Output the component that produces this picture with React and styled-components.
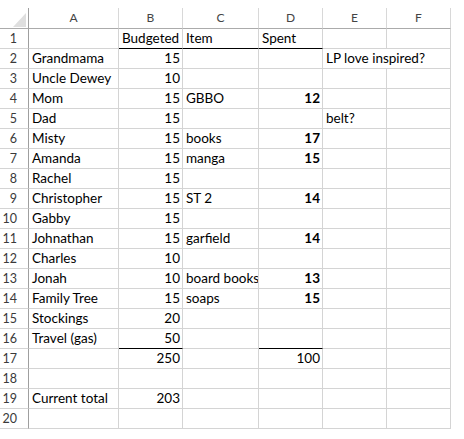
import React from "react";
import styled, { createGlobalStyle } from "styled-components";

const Global = createGlobalStyle`
  html, body { margin: 0; padding: 0; background: #ffffff; }
  body { font-family: Lato, "Liberation Sans", sans-serif; }
`;

const Page = styled.div`
  padding-top: 8px;
`;

const Sheet = styled.div`
  display: grid;
  grid-template-columns: 29px 90px 64px 76px 64px 64px 64px;
  grid-template-rows: 21px repeat(20, 20px);
  width: 451px;
  font-family: Lato, "Liberation Sans", sans-serif;
`;

const Corner = styled.div`
  position: relative;
  box-sizing: border-box;
  border-right: 1px solid #9f9f9f;
  border-bottom: 1px solid #ababab;
  &::after {
    content: "";
    position: absolute;
    right: 2px;
    bottom: 1px;
    width: 0;
    height: 0;
    border-style: solid;
    border-width: 0 0 14px 13px;
    border-color: transparent transparent #dfdfdf transparent;
  }
`;

const ColHead = styled.div`
  box-sizing: border-box;
  border-right: 1px solid #d8d8d8;
  border-bottom: 1px solid #ababab;
  font-size: 12px;
  line-height: 20px;
  text-align: center;
  color: #444444;
`;

const RowHead = styled.div`
  box-sizing: border-box;
  border-right: 1px solid #9f9f9f;
  border-bottom: 1px solid #d4d4d4;
  font-size: 12.5px;
  line-height: 20px;
  text-align: right;
  padding-right: 11px;
  color: #3a3a3a;
`;

const Cell = styled.div`
  box-sizing: border-box;
  grid-column: ${(p) => (p.$span ? `span ${p.$span}` : "auto")};
  border-right: 1px solid #d4d4d4;
  border-bottom: 1px solid ${(p) => (p.$rule ? "#000000" : "#d4d4d4")};
  font-size: 13.5px;
  line-height: 19px;
  padding: 0 2px 0 3px;
  white-space: nowrap;
  overflow: hidden;
  text-align: ${(p) => (p.$num ? "right" : "left")};
  font-weight: ${(p) => (p.$bold ? 700 : 400)};
  color: #000000;
`;

const cols = ["A", "B", "C", "D", "E", "F"];

// each row: [A, B, C, D, E, F] with optional cell config objects
const rows = [
  [null, { t: "Budgeted", rule: true }, { t: "Item", rule: true }, { t: "Spent", rule: true }, null, null],
  ["Grandmama", { t: "15", num: true }, null, null, { t: "LP love inspired?", span: 2 }],
  ["Uncle Dewey", { t: "10", num: true }, null, null, null, null],
  ["Mom", { t: "15", num: true }, "GBBO", { t: "12", num: true, bold: true }, null, null],
  ["Dad", { t: "15", num: true }, null, null, "belt?", null],
  ["Misty", { t: "15", num: true }, "books", { t: "17", num: true, bold: true }, null, null],
  ["Amanda", { t: "15", num: true }, "manga", { t: "15", num: true, bold: true }, null, null],
  ["Rachel", { t: "15", num: true }, null, null, null, null],
  ["Christopher", { t: "15", num: true }, "ST 2", { t: "14", num: true, bold: true }, null, null],
  ["Gabby", { t: "15", num: true }, null, null, null, null],
  ["Johnathan", { t: "15", num: true }, "garfield", { t: "14", num: true, bold: true }, null, null],
  ["Charles", { t: "10", num: true }, null, null, null, null],
  ["Jonah", { t: "10", num: true }, "board books", { t: "13", num: true, bold: true }, null, null],
  ["Family Tree", { t: "15", num: true }, "soaps", { t: "15", num: true, bold: true }, null, null],
  ["Stockings", { t: "20", num: true }, null, null, null, null],
  ["Travel (gas)", { t: "50", num: true, rule: true }, null, { t: "", rule: true }, null, null],
  [null, { t: "250", num: true }, null, { t: "100", num: true }, null, null],
  [null, null, null, null, null, null],
  ["Current total", { t: "203", num: true }, null, null, null, null],
  [null, null, null, null, null, null],
];

function renderCell(c, key) {
  if (c === null || c === undefined) return <Cell key={key} />;
  if (typeof c === "string") return <Cell key={key}>{c}</Cell>;
  return (
    <Cell key={key} $num={c.num} $bold={c.bold} $rule={c.rule} $span={c.span}>
      {c.t}
    </Cell>
  );
}

export default function App() {
  return (
    <Page>
      <Global />
      <Sheet>
        <Corner />
        {cols.map((c) => (
          <ColHead key={c}>{c}</ColHead>
        ))}
        {rows.map((r, i) => (
          <React.Fragment key={i}>
            <RowHead>{i + 1}</RowHead>
            {r.map((c, j) => renderCell(c, `${i}-${j}`))}
          </React.Fragment>
        ))}
      </Sheet>
    </Page>
  );
}
